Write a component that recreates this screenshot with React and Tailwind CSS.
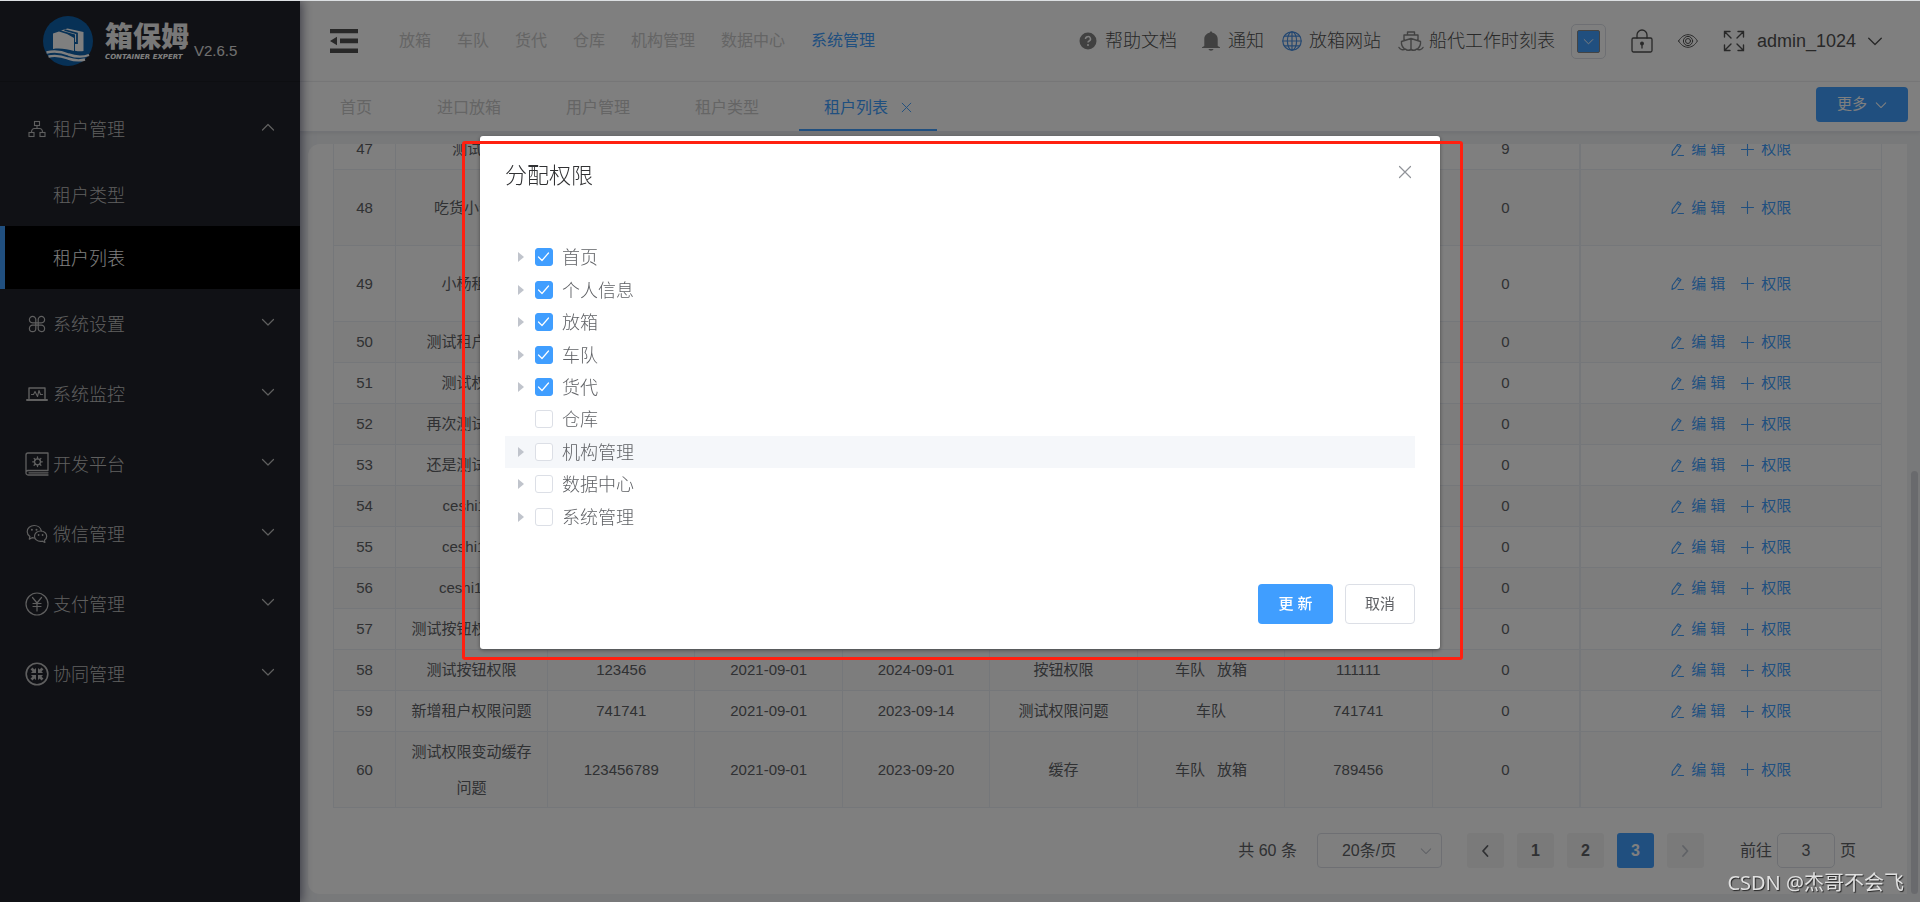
import { useState } from "react";

const stroke = { fill: "none", stroke: "currentColor", strokeLinecap: "round", strokeLinejoin: "round" };

function Chevron({ className = "", up = false, width = 1.2 }) {
  return (
    <svg viewBox="0 0 14 14" className={className} {...stroke} strokeWidth={width} aria-hidden="true">
      {up ? <path d="M1.5 10 7 4.5l5.5 5.5" /> : <path d="M1.5 4.5 7 10l5.5-5.5" />}
    </svg>
  );
}

function Cross({ className = "", width = 1.2 }) {
  return (
    <svg viewBox="0 0 14 14" className={className} {...stroke} strokeWidth={width} aria-hidden="true">
      <path d="M1.5 1.5l11 11M12.5 1.5l-11 11" />
    </svg>
  );
}

function OrgIcon() {
  return (
    <svg viewBox="0 0 18 18" className="size-[18px]" {...stroke} strokeWidth="1.1" strokeLinejoin="miter">
      <rect x="6.5" y="1.5" width="5" height="4" />
      <rect x="1" y="12.5" width="5" height="4" />
      <rect x="12" y="12.5" width="5" height="4" />
      <path d="M9 5.500v3M3.500 12.500c0-3 1-4 3-4h5c2 0 3 1 3 4" />
    </svg>
  );
}

function CommandIcon() {
  return (
    <svg viewBox="0 0 18 18" className="size-[18px]" {...stroke} strokeWidth="1.2">
      <path d="M7.800 7.800V4.600a3.200 3.200 0 1 0-3.200 3.200h8.800a3.200 3.200 0 1 0-3.200-3.200v8.800a3.200 3.200 0 1 0 3.200-3.200H4.600a3.200 3.200 0 1 0 3.200 3.200z" />
    </svg>
  );
}

function MonitorIcon() {
  return (
    <svg viewBox="0 0 22 18" className="h-[18px] w-[22px]" {...stroke} strokeWidth="1.400">
      <path d="M3 13.500V3h16v10.500" />
      <path d="M1 15h20" strokeWidth="2" />
      <path d="M5.500 9.500h2l1.500-3 2.500 5 1.500-6 1.500 4h2" strokeWidth="1.100" />
    </svg>
  );
}

function PlatformIcon() {
  return (
    <svg viewBox="0 0 24 24" className="size-6" {...stroke} strokeWidth="1.300">
      <path d="M23 18.500V1H3a2 2 0 0 0-2 2v18a2 2 0 0 1 2-2.500h20M23 23H3a2 2 0 0 1-2-2M4 20.800h19" />
      <circle cx="12.500" cy="9.800" r="3" />
      <path d="M12.500 5v1.800M12.500 12.800v1.800M7.700 9.800h1.800M15.500 9.800h1.800M9.100 6.400l1.300 1.300M14.600 11.900l1.300 1.300M15.900 6.400l-1.300 1.300M10.400 11.900l-1.300 1.300" />
    </svg>
  );
}

function WechatIcon() {
  return (
    <svg viewBox="0 0 22 20" className="h-5 w-[22px]" {...stroke} strokeWidth="1.200">
      <path d="M15.300 6.900C14.700 3.700 11.700 1.500 8.200 1.500 4.300 1.500 1.200 4.200 1.200 7.700c0 2 1.100 3.700 2.700 4.800l-.6 2.600 2.800-1.400c.7.200 1.400.3 2.100.3" />
      <path d="M14.600 7c3.400 0 6.100 2.300 6.100 5.200 0 1.700-.9 3.100-2.300 4.100l.5 2.200-2.400-1.300c-.6.1-1.200.2-1.900.2-3.400 0-6.100-2.300-6.100-5.200S11.200 7 14.600 7z" />
      <g fill="currentColor" stroke="none">
        <circle cx="5.900" cy="5.800" r="1" />
        <circle cx="10.500" cy="5.800" r="1" />
        <circle cx="12.600" cy="11" r=".9" />
        <circle cx="16.600" cy="11" r=".9" />
      </g>
    </svg>
  );
}

function YuanIcon() {
  return (
    <svg viewBox="0 0 24 24" className="size-6" {...stroke} strokeWidth="1.200">
      <circle cx="12" cy="12" r="11" />
      <path d="M7.500 5.500 12 11l4.500-5.500M12 11v8M8 11.500h8M8 14.500h8" />
    </svg>
  );
}

function CollabIcon() {
  return (
    <svg viewBox="0 0 24 24" className="size-6">
      <circle cx="12" cy="12" r="10.800" fill="none" stroke="currentColor" strokeWidth="1.600" />
      <g fill="currentColor">
        <path d="M11 11V6L9.300 7.500 7.500 5.500 5.500 7.500l2 1.800L6 11z" />
        <path d="M13 11V6l1.700 1.500 1.800-2 2 2-2 1.800L18 11z" />
        <path d="M11 13v5l-1.700-1.500-1.800 2-2-2 2-1.800L6 13z" />
        <path d="M13 13v5l1.700-1.500 1.800 2 2-2-2-1.800L18 13z" />
      </g>
    </svg>
  );
}

function CollapseIcon() {
  return (
    <svg viewBox="0 0 28 24" className="h-6 w-7" fill="currentColor">
      <path d="M0 0h28v4.300H0zM10 9.500h18v4.700H10zM0 19.500h28V24H0zM0 12l7-4.300v8.600z" />
    </svg>
  );
}

function HelpIcon() {
  return (
    <svg viewBox="0 0 18 18" className="size-[18px]">
      <circle cx="9" cy="9" r="8.500" fill="currentColor" />
      <path d="M6.500 7a2.500 2.300 0 1 1 3.600 2c-.8.4-1.100.8-1.100 1.600" fill="none" stroke="#fff" strokeWidth="1.500" />
      <circle cx="9" cy="13" r="1" fill="#fff" />
    </svg>
  );
}

function BellIcon() {
  return (
    <svg viewBox="0 0 20 20" className="size-5" fill="currentColor">
      <path d="M10 .5c.8 0 1.300.5 1.300 1.200 3.300.6 5.400 3 5.400 6.300v7l2.300 1.200v.8H1v-.8L3.300 15V8c0-3.300 2.100-5.700 5.400-6.300C8.700 1 9.200.5 10 .5zM7.500 18h5c-.3 1-1.200 1.700-2.500 1.700S7.800 19 7.500 18z" />
    </svg>
  );
}

function GlobeIcon() {
  return (
    <svg viewBox="0 0 20 20" className="size-5" {...stroke} strokeWidth="1.200">
      <circle cx="10" cy="10" r="9.200" />
      <ellipse cx="10" cy="10" rx="4.600" ry="9.200" />
      <path d="M10 .8v18.400M.8 10h18.400M2.300 5.200h15.400M2.300 14.800h15.400" />
    </svg>
  );
}

function ShipIcon() {
  return (
    <svg viewBox="0 0 26 20" className="h-5 w-[26px]" {...stroke} strokeWidth="1.400">
      <path d="M9.500 3.500V1h7v2.500M6 9V4h14v5M13 7.500V19M3.500 10.500 13 7.500l9.500 3c.3 2.500-.8 5.500-3 7.500M3.500 10.500c-.3 2.500.8 5.500 3 7.500" />
      <path d="M1 16.500c1 2 4 3 6.500 1.500 1 1.200 3.500 1.500 5.500.5 2 1 4.500.7 5.500-.5 2.500 1.500 5.500.5 6.500-1.500" />
    </svg>
  );
}

function LockIcon() {
  return (
    <svg viewBox="0 0 22 24" className="h-6 w-[22px]" {...stroke} strokeWidth="1.300">
      <rect x="1" y="9" width="20" height="14" rx="1.500" />
      <path d="M6 9V6a5 5 0 0 1 10 0v3M11 16v3" />
      <circle cx="11" cy="14.500" r="1.300" fill="currentColor" />
    </svg>
  );
}

function EyeIcon() {
  return (
    <svg viewBox="0 0 20 14" className="h-[14px] w-5" {...stroke} strokeWidth="1">
      <path d="M.6 7C3 3 6.300.7 10 .7S17 3 19.400 7C17 11 13.700 13.300 10 13.300S3 11 .6 7z" />
      <circle cx="10" cy="7" r="4.600" />
      <circle cx="10" cy="7" r="2.500" />
    </svg>
  );
}

function FullscreenIcon() {
  return (
    <svg viewBox="0 0 22 22" className="size-[22px]" {...stroke} strokeWidth="1.400" strokeLinejoin="miter">
      <path d="M1.500 7V1.500H7M1.500 1.500l6.500 6.500M15 1.500h5.500V7M20.500 1.500 14 8M20.500 15v5.500H15M20.500 20.500 14 14M7 20.500H1.500V15M1.500 20.500 8 14" />
    </svg>
  );
}

function PenIcon() {
  return (
    <svg viewBox="0 0 15 15" className="size-[15px]" {...stroke} strokeWidth="1.100">
      <path d="M2 13.500l.4-4L8 1.800l3 2-5.500 8L2 13.500zM7 3.400l3 2M8 13.500h5.500" />
    </svg>
  );
}

function PlusIcon() {
  return (
    <svg viewBox="0 0 15 15" className="size-[15px]" {...stroke} strokeWidth="1.100">
      <path d="M7.500 1.500v12M1.500 7.500h12" />
    </svg>
  );
}

function LogoMark() {
  return (
    <svg viewBox="0 0 50 50" className="size-[50px]" aria-hidden="true">
      <circle cx="25" cy="25" r="25" fill="#0f62ac" />
      <path d="M10 17.500l6-2 8 2.500 7 4V35c-7-2-14-3-21-2z" fill="#fff" />
      <path d="M18 14.500l6.500-2 16 3.500V35c-2.500.5-5.500.3-8.500-.3V18.500z" fill="#fff" />
      <path d="M21.500 14l12.500 3.500v9.500h-3" fill="none" stroke="#0f62ac" strokeWidth="1.800" />
      <path d="M3.500 36.500c8-2 15-1 22 2 7 2.500 14 3 20.500.5M5.500 40.500c7-1.500 13-.5 19.500 2 6 2 11.500 2.500 17 1" fill="none" stroke="#fff" strokeWidth="2.400" />
    </svg>
  );
}

const MENU = [
  { label: "系统设置", icon: <CommandIcon /> },
  { label: "系统监控", icon: <MonitorIcon /> },
  { label: "开发平台", icon: <PlatformIcon /> },
  { label: "微信管理", icon: <WechatIcon /> },
  { label: "支付管理", icon: <YuanIcon /> },
  { label: "协同管理", icon: <CollabIcon /> },
];

function MenuGroup({ icon, label, open = false }) {
  return (
    <button type="button" aria-expanded={open} className="flex h-[70px] w-full items-center pr-[25px] pl-6 text-left">
      <span className="flex w-[26px] justify-center">{icon}</span>
      <span className="ml-[3px] flex-1 pt-[2px]">{label}</span>
      <Chevron className="mb-1 size-[14px]" up={open} />
    </button>
  );
}

function Sidebar() {
  return (
    <aside className="z-10 flex w-[300px] shrink-0 flex-col bg-[#20222a] text-lg font-light text-[#bfbfbf] shadow-[2px_0_10px_rgba(0,0,40,0.5)]">
      <div className="flex h-[81px] items-center border-b border-[#1b1c22] pl-[43px] font-normal">
        <LogoMark />
        <div className="ml-3 flex flex-col pt-1">
          <span className="text-[28px] leading-7 font-black text-[#f0f0f0]">箱保姆</span>
          <span className="font-['DejaVu_Sans'] text-[7px] leading-[10px] font-bold whitespace-nowrap text-white italic">CONTAINER EXPERT</span>
        </div>
        <span className="ml-[5px] pt-5 text-[15px] text-[#e0e0e0]">V2.6.5</span>
      </div>
      <nav className="pt-3">
        <MenuGroup icon={<OrgIcon />} label="租户管理" open />
        <a href="#types" className="flex h-[62px] items-center pt-[2px] pl-[53px]">租户类型</a>
        <a href="#tenants" className="flex h-[63px] items-center border-l-[5px] border-[#409eff] bg-black pt-[2px] pl-[48px] text-white">租户列表</a>
        {MENU.map((item) => (
          <MenuGroup key={item.label} {...item} />
        ))}
      </nav>
    </aside>
  );
}

const MODULES = ["放箱", "车队", "货代", "仓库", "机构管理", "数据中心", "系统管理"];

function Header() {
  return (
    <header className="flex h-[81px] items-center border-b border-[#f0f1f3] pr-[37px] pl-[30px]">
      <button type="button" aria-label="折叠菜单" className="text-[#505050]">
        <CollapseIcon />
      </button>
      <nav className="ml-[41px] flex gap-[26px] text-base text-[#cacaca]">
        {MODULES.map((m) => (
          <a key={m} href="#module" className={m === "系统管理" ? "text-[#409eff]" : ""}>{m}</a>
        ))}
      </nav>
      <div className="ml-auto flex items-center text-lg font-light text-[#505050]">
        <a href="#help" className="flex items-center gap-2"><span className="text-[#828282]"><HelpIcon /></span>帮助文档</a>
        <a href="#notice" className="ml-6 flex items-center gap-[7px]"><span className="text-[#828282]"><BellIcon /></span>通知</a>
        <a href="#site" className="ml-[18px] flex items-center gap-[7px]"><span className="text-[#4a90e2]"><GlobeIcon /></span>放箱网站</a>
        <a href="#schedule" className="ml-[17px] flex items-center gap-[5px]"><span className="text-[#858585]"><ShipIcon /></span>船代工作时刻表</a>
        <button type="button" aria-label="主题颜色" className="ml-4 flex size-[35px] items-center justify-center rounded-[5px] border border-[#dcdfe6]">
          <span className="flex size-[23px] items-center justify-center rounded-[2px] border border-[#888] bg-[#409eff] text-white">
            <Chevron className="size-[11px]" />
          </span>
        </button>
        <button type="button" aria-label="锁屏" className="ml-[25px]"><LockIcon /></button>
        <button type="button" aria-label="护眼模式" className="ml-[25px]"><EyeIcon /></button>
        <button type="button" aria-label="全屏" className="ml-[25px]"><FullscreenIcon /></button>
        <button type="button" className="ml-3 flex items-center gap-[11px]">admin_1024<Chevron className="size-4" /></button>
      </div>
    </header>
  );
}

const TABS = ["首页", "进口放箱", "用户管理", "租户类型"];

function TabBar() {
  return (
    <div className="flex h-[50px] items-stretch border-b border-[#e4e7ed] pr-3 pl-[15px] text-base text-[#cacaca] shadow-[0_1px_4px_rgba(0,0,0,0.08)]">
      {TABS.map((t) => (
        <a key={t} href="#tab" className="flex items-center pt-[2px] pr-10 pl-[25px]">{t}</a>
      ))}
      <div className="flex items-center border-b-2 border-[#409eff] pt-1 pr-[25px] pl-[25px] text-[#409eff]">
        <a href="#tab">租户列表</a>
        <button type="button" aria-label="关闭标签" className="ml-[13px]"><Cross className="size-[11px]" /></button>
      </div>
      <button type="button" className="mt-[5px] ml-auto flex h-[35px] w-[92px] items-center justify-center gap-2 rounded bg-[#409eff] text-[15px] text-white">
        更多<Chevron className="size-3" />
      </button>
    </div>
  );
}

const row = (id, name, rest = [], tenants = 0, tall = false) => ({ id, name, rest, tenants, tall });

const ROWS = [
  row(47, "测试1", [], 9),
  row(48, "吃货小分队", [], 0, true),
  row(49, "小杨租户", [], 0, true),
  row(50, "测试租户权限"),
  row(51, "测试权限"),
  row(52, "再次测试权限"),
  row(53, "还是测试权限"),
  row(54, "ceshi111"),
  row(55, "ceshi112"),
  row(56, "ceshi1111"),
  row(57, "测试按钮权限问题"),
  row(58, "测试按钮权限", ["123456", "2021-09-01", "2024-09-01", "按钮权限", ["车队", "放箱"], "111111"]),
  row(59, "新增租户权限问题", ["741741", "2021-09-01", "2023-09-14", "测试权限问题", "车队", "741741"]),
  row(60, "测试权限变动缓存问题", ["123456789", "2021-09-01", "2023-09-20", "缓存", ["车队", "放箱"], "789456"], 0, true),
];

const CELL = "border border-[#ebeef5] p-0";

function TenantTable() {
  return (
    <table className="-mt-4 w-full table-fixed border-collapse text-center text-[15px] leading-9 text-[#606266]">
      <colgroup>
        <col className="w-[62px]" />
        <col className="w-[152px]" />
        <col /><col /><col /><col /><col /><col /><col />
        <col className="w-[302px]" />
      </colgroup>
      <tbody>
        {ROWS.map((r) => (
          <tr key={r.id} className={`${r.tall ? "h-[76px]" : "h-[41px]"} ${r.id % 2 === 0 ? "bg-[#fafafa]" : "bg-white"}`}>
            <td className={CELL}>{r.id}</td>
            <td className="border border-[#ebeef5] px-3 py-0">{r.name}</td>
            {[0, 1, 2, 3, 4, 5].map((i) => (
              <td key={i} className={CELL}>
                {Array.isArray(r.rest[i]) ? (
                  <span className="flex justify-center gap-3">{r.rest[i].map((v) => <span key={v}>{v}</span>)}</span>
                ) : (
                  r.rest[i]
                )}
              </td>
            ))}
            <td className={CELL}>{r.tenants}</td>
            <td className="border border-l-2 border-[#ebeef5] p-0 text-[#409eff]">
              <div className="flex items-center justify-center gap-[15px]">
                <button type="button" className="flex items-center gap-[6px]"><PenIcon />编 辑</button>
                <button type="button" className="flex items-center gap-[6px]"><PlusIcon />权限</button>
              </div>
            </td>
          </tr>
        ))}
      </tbody>
    </table>
  );
}

const PAGE_BTN = "flex h-[35px] w-[37px] items-center justify-center rounded-[3px] bg-[#f4f4f5] font-bold text-[#606266]";

function Pagination() {
  return (
    <div className="mt-[25px] flex items-center justify-end pr-[26px] text-base text-[#606266]">
      <span>共 60 条</span>
      <div className="relative ml-5">
        <select aria-label="每页条数" defaultValue="20" className="h-[35px] w-[125px] appearance-none rounded border border-[#dcdfe6] bg-white pl-6 text-base">
          <option value="20">20条/页</option>
        </select>
        <Chevron className="pointer-events-none absolute top-3 right-[10px] size-3 text-[#c0c4cc]" />
      </div>
      <div className="ml-[25px] flex gap-[13px]">
        <button type="button" aria-label="上一页" className={PAGE_BTN}>
          <svg viewBox="0 0 14 14" className="size-[14px]" {...stroke} strokeWidth="1.800"><path d="M9.500 2 5 7l4.500 5" /></svg>
        </button>
        <button type="button" className={PAGE_BTN}>1</button>
        <button type="button" className={PAGE_BTN}>2</button>
        <button type="button" aria-current="page" className="flex h-[35px] w-[37px] items-center justify-center rounded-[3px] bg-[#409eff] font-bold text-white">3</button>
        <button type="button" aria-label="下一页" disabled className="flex h-[35px] w-[37px] items-center justify-center rounded-[3px] bg-[#f4f4f5] text-[#c0c4cc]">
          <svg viewBox="0 0 14 14" className="size-[14px]" {...stroke} strokeWidth="1.800"><path d="M5 2l4.500 5L5 12" /></svg>
        </button>
      </div>
      <label className="ml-9 flex items-center gap-[5px]">
        前往
        <input type="text" defaultValue="3" className="h-[35px] w-[58px] rounded-[5px] border border-[#dcdfe6] bg-white text-center text-base" />
        页
      </label>
    </div>
  );
}

const TREE = [
  ["首页", true, true],
  ["个人信息", true, true],
  ["放箱", true, true],
  ["车队", true, true],
  ["货代", true, true],
  ["仓库", false, false],
  ["机构管理", false, true],
  ["数据中心", false, true],
  ["系统管理", false, true],
];

function TreeRow({ label, initial, expandable }) {
  const [checked, setChecked] = useState(initial);
  return (
    <li className={`flex items-center pl-3 ${label === "机构管理" ? "bg-[#f5f7fa]" : ""}`}>
      <span className="flex w-[18px] shrink-0">
        {expandable && (
          <svg viewBox="0 0 8 10" className="h-[10px] w-2 text-[#c0c4cc]" fill="currentColor"><path d="M1 0l6 5-6 5z" /></svg>
        )}
      </span>
      <label className="flex items-center gap-[9px]">
        <span className="grid">
          <input
            type="checkbox"
            checked={checked}
            onChange={() => setChecked(!checked)}
            className="col-start-1 row-start-1 size-[18px] appearance-none rounded-[3px] border border-[#dcdfe6] bg-white checked:border-[#409eff] checked:bg-[#409eff]"
          />
          {checked && (
            <svg viewBox="0 0 18 18" className="pointer-events-none col-start-1 row-start-1 size-[18px] text-white" {...stroke} strokeWidth="1.200">
              <path d="M3.500 9l3.500 3.500 6.500-7.500" />
            </svg>
          )}
        </span>
        <span className="pt-[2px]">{label}</span>
      </label>
    </li>
  );
}

function PermissionDialog() {
  return (
    <div className="fixed inset-0 z-20 flex items-start justify-center bg-black/50 pt-[136px]">
      <div role="dialog" aria-labelledby="dialog-title" className="relative w-1/2 rounded-[3px] bg-white px-[25px] pb-[25px] shadow-[0_1px_4px_rgba(0,0,0,0.4)]">
        <div className="flex h-[79px] items-center justify-between">
          <h2 id="dialog-title" className="text-[22px] font-light text-[#303133]">分配权限</h2>
          <button type="button" aria-label="关闭" className="mr-[3px] pb-2 text-[#909399]"><Cross className="size-[14px]" /></button>
        </div>
        <ul className="mt-[26px] grid h-[292px] auto-rows-fr text-lg font-light text-[#606266]">
          {TREE.map(([label, initial, expandable]) => (
            <TreeRow key={label} label={label} initial={initial} expandable={expandable} />
          ))}
        </ul>
        <div className="mt-[51px] flex justify-end gap-3 text-[15px]">
          <button type="button" className="h-10 w-[75px] rounded bg-[#409eff] font-medium text-white">更 新</button>
          <button type="button" className="h-10 w-[70px] rounded border border-[#dcdfe6] bg-white text-[#606266]">取消</button>
        </div>
        <div className="pointer-events-none absolute top-[5px] -right-[23px] -bottom-[11px] -left-[18px] rounded-[3px] border-[3px] border-[#ff2010]" />
      </div>
    </div>
  );
}

export default function App() {
  return (
    <div className="relative flex min-h-screen bg-[#f0f2f5] pt-px font-['Liberation_Sans','Noto_Sans_CJK_SC',sans-serif]">
      <Sidebar />
      <div className="flex min-w-0 flex-1 flex-col">
        <div className="bg-white">
          <Header />
          <TabBar />
        </div>
        <main className="flex-1 pt-3 pr-[13px] pb-[9px] pl-2">
          <section className="overflow-hidden rounded-l-xl bg-white px-[25px] pb-[26px]">
            <TenantTable />
            <Pagination />
          </section>
        </main>
      </div>
      <div className="absolute right-[2px] bottom-[9px] h-[423px] w-[7px] rounded-full bg-[#d3d5da]" />
      <PermissionDialog />
      <div className="fixed inset-x-0 top-0 z-30 h-px bg-[#dcdfe2]" />
      <span className="absolute right-4 bottom-[6px] z-30 font-['Noto_Sans','Noto_Sans_CJK_SC',sans-serif] text-xl leading-7 text-[#e0e0e0] [text-shadow:1px_1px_1px_rgba(0,0,0,0.7)]">CSDN @杰哥不会飞</span>
    </div>
  );
}
